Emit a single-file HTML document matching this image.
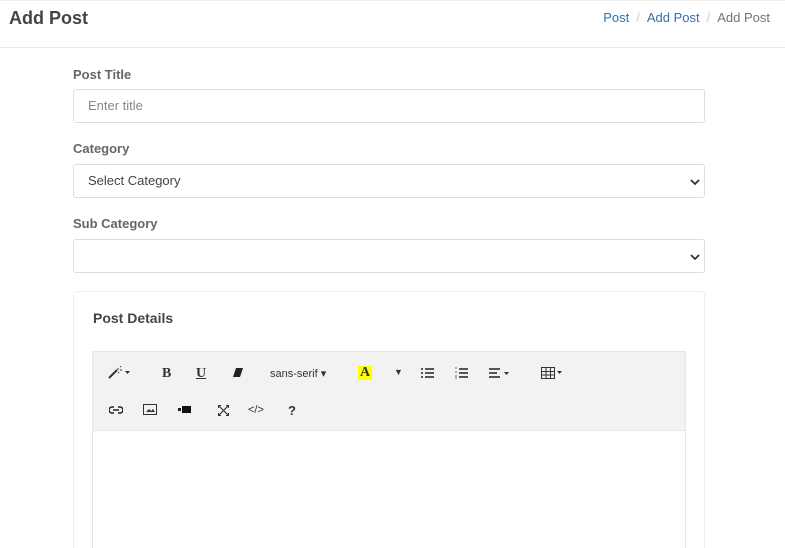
<!DOCTYPE html>
<html style="width:785px;height:548px;overflow:hidden"><head><style>
*{box-sizing:border-box;margin:0;padding:0}
body{width:785px;height:548px;overflow:hidden;background:#fff;font-family:"Liberation Sans",Arial,sans-serif;position:relative}
.hdr{position:absolute;left:0;top:0;width:785px;height:48px;border-top:1px solid #eee;border-bottom:1px solid #e8e8e8;background:#fff}
.hdr h1{position:absolute;left:9px;top:7px;font-size:18px;font-weight:bold;color:#444}
.bc{position:absolute;right:15px;top:9px;font-size:13px;color:#6c757d}
.bc a{color:#3a6ea5;text-decoration:none}
.bc .s{color:#ccc;margin:0 7px}
.lbl{position:absolute;left:73px;font-size:13px;font-weight:bold;color:#666}
.inp{position:absolute;left:73px;width:632px;height:34px;border:1px solid #ddd;border-radius:3px;font-size:13px;padding:0 14px;line-height:32px;color:#444}
.arr{position:absolute;right:4px;top:13px}
.card{position:absolute;left:73px;top:291px;width:632px;height:257px;border:1px solid #eee;border-bottom:none;border-radius:4px 4px 0 0;overflow:hidden}
.card h3{position:absolute;left:19px;top:18px;font-size:14px;font-weight:bold;color:#444}
.tb{position:absolute;left:18px;top:59px;width:594px;height:80px;background:#f2f2f2;border:1px solid #e6e6e6}
.ed{position:absolute;left:18px;top:139px;width:594px;height:130px;border:1px solid #e6e6e6;border-top:none}
.i{position:absolute;font-size:12px;color:#333}
</style></head><body>
<div class="hdr"><h1>Add Post</h1>
<div class="bc"><a>Post</a><span class="s">/</span><a>Add Post</a><span class="s">/</span>Add Post</div></div>

<div class="lbl" style="top:67px">Post Title</div>
<div class="inp" style="top:89px;color:#888">Enter title</div>
<div class="lbl" style="top:141px">Category</div>
<div class="inp" style="top:164px">Select Category<svg class="arr" width="10" height="8" viewBox="0 0 10 8"><path d="M1 2l4 4 4-4" stroke="#333" stroke-width="1.8" fill="none"/></svg></div>
<div class="lbl" style="top:216px">Sub Category</div>
<div class="inp" style="top:239px"><svg class="arr" width="10" height="8" viewBox="0 0 10 8"><path d="M1 2l4 4 4-4" stroke="#333" stroke-width="1.8" fill="none"/></svg></div>

<div class="card"><h3>Post Details</h3>
<div class="tb">
<svg class="i" style="left:14px;top:14px" width="24" height="14" viewBox="0 0 24 14"><path d="M2 12l8-8" stroke="#333" stroke-width="2"/><path d="M11 2v2M13 4h2M11 6l1 1M13 1l1-1" stroke="#333" stroke-width="1"/><path d="M18 5l2.5 3 2.5-3z" fill="#333"/></svg>
<b class="i" style="left:69px;top:14px;font-family:'Liberation Serif',serif;font-size:14px">B</b>
<b class="i" style="left:103px;top:14px;font-family:'Liberation Serif',serif;font-size:14px;text-decoration:underline">U</b>
<svg class="i" style="left:139px;top:15px" width="12" height="11" viewBox="0 0 12 11"><path d="M4 1h7l-3 9H1z" fill="#222"/></svg>
<span class="i" style="left:177px;top:15px;font-size:11px">sans-serif ▾</span>
<b class="i" style="left:265px;top:14px;font-family:'Liberation Serif',serif;font-size:14px;background:#ff0;padding:0 2px;line-height:14px">A</b>
<span class="i" style="left:301px;top:15px;font-size:9px">▼</span>
<svg class="i" style="left:328px;top:16px" width="13" height="10" viewBox="0 0 13 10"><path d="M0 1h2M4 1h9M0 5h2M4 5h9M0 9h2M4 9h9" stroke="#222" stroke-width="1.6"/></svg>
<svg class="i" style="left:362px;top:15px" width="13" height="12" viewBox="0 0 13 12"><path d="M4 2h9M4 6h9M4 10h9" stroke="#222" stroke-width="1.6"/><path d="M0 1h2M0 5h2M0 9h2M0 11h2" stroke="#444" stroke-width=".8"/></svg>
<svg class="i" style="left:396px;top:16px" width="22" height="10" viewBox="0 0 22 10"><path d="M0 1h11M0 5h8M0 9h11" stroke="#222" stroke-width="1.4"/><path d="M15 4l2.5 3 2.5-3z" fill="#333"/></svg>
<svg class="i" style="left:448px;top:15px" width="24" height="12" viewBox="0 0 24 12"><path d="M.5.5h13v11H.5zM.5 4.5h13M.5 8h13M5 .5v11M9.5 .5v11" stroke="#333" stroke-width="1" fill="none"/><path d="M16 4l2.5 3 2.5-3z" fill="#333"/></svg>
<svg class="i" style="left:16px;top:54px" width="14" height="8" viewBox="0 0 14 8"><path d="M5 1H3a3 3 0 000 6h2M9 1h2a3 3 0 010 6H9M4 4h6" stroke="#222" stroke-width="1.5" fill="none"/></svg>
<svg class="i" style="left:50px;top:52px" width="14" height="11" viewBox="0 0 14 11"><path d="M.5.5h13v10H.5z" stroke="#333" fill="none"/><path d="M3 8l3-3 2 2 2-2 2 3z" fill="#333"/></svg>
<svg class="i" style="left:85px;top:53px" width="13" height="9" viewBox="0 0 13 9"><path d="M0 3h3v3H0z" fill="#222"/><path d="M4 1h9v7H4z" fill="#111"/></svg>
<svg class="i" style="left:125px;top:53px" width="11" height="11" viewBox="0 0 11 11"><path d="M1 1l9 9M10 1l-9 9" stroke="#333" stroke-width="1.2"/><path d="M0 0h3v1H1v2H0zM11 0H8v1h2v2h1zM0 11h3v-1H1V8H0zM11 11H8v-1h2V8h1z" fill="#333"/></svg>
<span class="i" style="left:155px;top:52px;font-size:11px">&lt;/&gt;</span>
<b class="i" style="left:195px;top:51px;font-size:13px">?</b>
</div>
<div class="ed"></div>
</div>
</body></html>
